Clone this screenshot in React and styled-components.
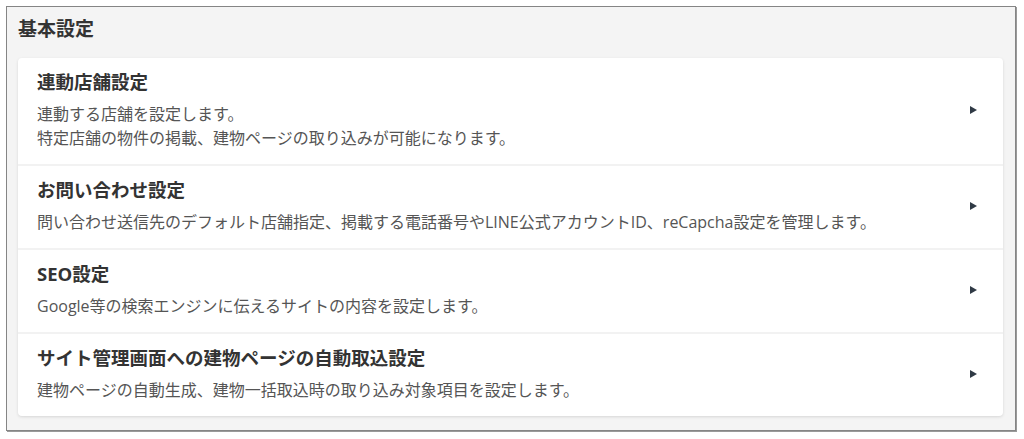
import React from "react";
import styled, { createGlobalStyle } from "styled-components";

const GlobalStyle = createGlobalStyle`
  html, body { margin: 0; padding: 0; background: #ffffff; }
  body { font-family: "Open Sans", "Noto Sans CJK JP", sans-serif; color: #333; }
`;

const Page = styled.div`
  padding: 6px 8px 8px 6px;
`;

const Frame = styled.section`
  background: #f4f4f4;
  border: 1px solid #858585;
  box-shadow: 1px 1px 0 #9a9a9a;
  padding: 9px 12px 14px 11px;
  display: flex;
  flex-direction: column;
  gap: 15px;
`;

const Heading = styled.h2`
  margin: 0;
  font-size: 19px;
  line-height: 27px;
  font-weight: 700;
  color: #333;
`;

const Card = styled.div`
  background: #fff;
  border-radius: 4px;
  box-shadow: 0 1px 3px rgba(0, 0, 0, 0.12);
  display: flex;
  flex-direction: column;
`;

const Row = styled.div`
  display: flex;
  align-items: center;
  padding: 11px 26px 14px 19px;
  border-top: ${(p) => (p.$first ? "none" : "2px solid #f2f2f2")};
  cursor: pointer;
`;

const RowText = styled.div`
  flex: 1;
  display: flex;
  flex-direction: column;
  gap: 7px;
`;

const Title = styled.div`
  font-size: 18.5px;
  line-height: 26px;
  font-weight: 700;
  color: #333;
`;

const Desc = styled.div`
  font-size: 16px;
  line-height: 24px;
  color: #555;
`;

const Arrow = styled.span`
  width: 0;
  height: 0;
  border-top: 4.5px solid transparent;
  border-bottom: 4.5px solid transparent;
  border-left: 7px solid #2f3a45;
`;

const items = [
  {
    title: "連動店舗設定",
    desc: ["連動する店舗を設定します。", "特定店舗の物件の掲載、建物ページの取り込みが可能になります。"],
  },
  {
    title: "お問い合わせ設定",
    desc: ["問い合わせ送信先のデフォルト店舗指定、掲載する電話番号やLINE公式アカウントID、reCapcha設定を管理します。"],
  },
  {
    title: "SEO設定",
    desc: ["Google等の検索エンジンに伝えるサイトの内容を設定します。"],
  },
  {
    title: "サイト管理画面への建物ページの自動取込設定",
    desc: ["建物ページの自動生成、建物一括取込時の取り込み対象項目を設定します。"],
  },
];

export default function App() {
  return (
    <>
      <GlobalStyle />
      <Page>
        <Frame>
          <Heading>基本設定</Heading>
          <Card>
            {items.map((it, i) => (
              <Row key={it.title} $first={i === 0}>
                <RowText>
                  <Title>{it.title}</Title>
                  <Desc>
                    {it.desc.map((d, j) => (
                      <div key={j}>{d}</div>
                    ))}
                  </Desc>
                </RowText>
                <Arrow />
              </Row>
            ))}
          </Card>
        </Frame>
      </Page>
    </>
  );
}
